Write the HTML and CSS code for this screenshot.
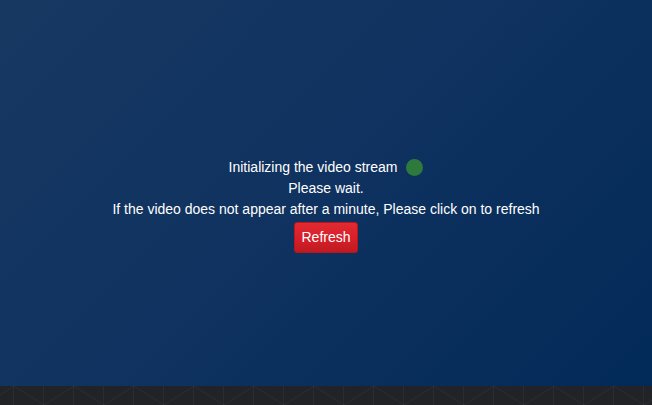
FILE: index.html
```html
<!DOCTYPE html>
<html>
<head>
<meta charset="utf-8">
<link rel="stylesheet" href="styles.css">
</head>
<body>
<div class="page">
  <main class="stage">
    <div class="status">
      <p class="line">Initializing the video stream <span class="dot"></span></p>
      <p class="line">Please wait.</p>
      <p class="line">If the video does not appear after a minute, Please click on to refresh</p>
      <button class="refresh" type="button">Refresh</button>
    </div>
  </main>
  <footer class="bar"></footer>
</div>
</body>
</html>
```
FILE: styles.css
```css
html, body {
  margin: 0;
  padding: 0;
  height: 100%;
}
body {
  font-family: "Liberation Sans", Arial, sans-serif;
  background: #222326;
}
.page {
  display: flex;
  flex-direction: column;
  height: 405px;
}
.stage {
  height: 386px;
  background: linear-gradient(135deg, #173861 0%, #0f3260 50%, #022a58 100%);
  color: #ffffff;
  text-align: center;
  padding-top: 157px;
  box-sizing: border-box;
}
.status {
  display: flex;
  flex-direction: column;
  align-items: center;
}
.line {
  margin: 0;
  font-size: 14px;
  line-height: 21px;
  display: flex;
  align-items: center;
}
.dot {
  display: inline-block;
  width: 17px;
  height: 17px;
  border-radius: 50%;
  background: #2e7a3c;
  margin-left: 9px;
}
.refresh {
  margin-top: 2px;
  font-family: "Liberation Sans", Arial, sans-serif;
  font-size: 14px;
  line-height: 19px;
  color: #ffffff;
  padding: 5px 6px;
  border: 1px solid #b8161e;
  border-radius: 3px;
  background: linear-gradient(180deg, #e22a33 0%, #d8202a 50%, #bf1a21 100%);
}
.bar {
  height: 19px;
  background-color: #222326;
  background-image:
    repeating-linear-gradient(90deg, transparent 0 13px, rgba(255,255,255,0.045) 13px 14px, transparent 14px 30px),
    url("data:image/svg+xml,%3Csvg xmlns='http://www.w3.org/2000/svg' width='60' height='19'%3E%3Cpath d='M-16 19 L14 0 L44 19 L74 0' fill='none' stroke='rgba(255,255,255,0.045)' stroke-width='1'/%3E%3C/svg%3E");
  background-position: 0 0, 0 0;
}
```
